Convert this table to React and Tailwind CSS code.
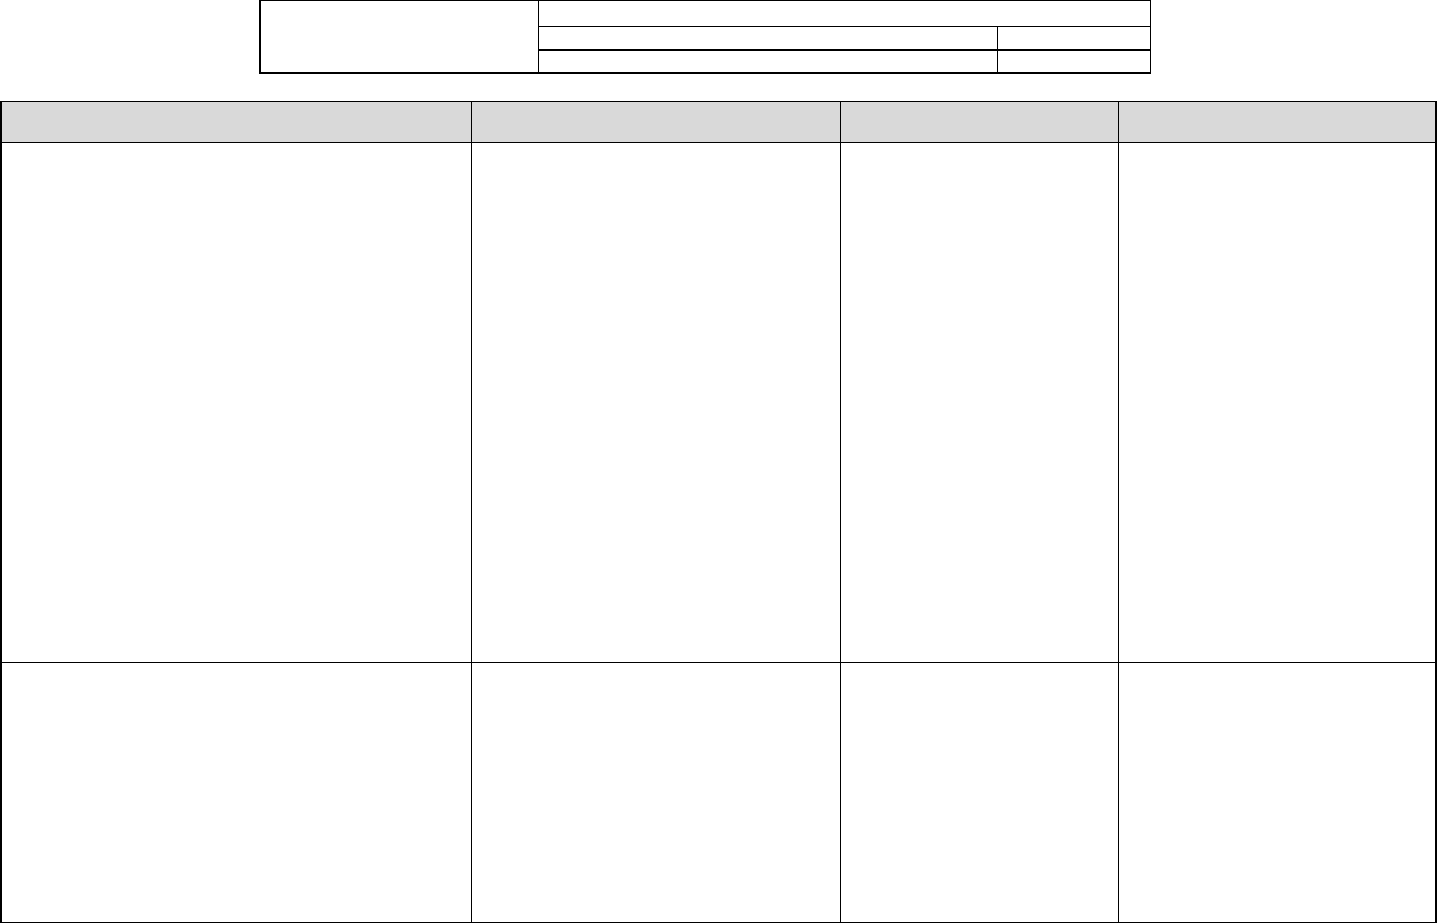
export default function App() {
  const cols = ["w-[470px]", "w-[369px]", "w-[278px]", "w-[318px]"];

  return (
    <div className="w-[1437px] h-[924px] bg-white overflow-hidden font-['Liberation_Sans',Arial,sans-serif]">
      {/* Title block */}
      <div className="ml-[259px] w-[892px] h-[74px] flex border-t border-r border-l-2 border-b-2 border-black">
        <div className="w-[278px] border-r border-black" />
        <div className="flex-1 flex flex-col">
          <div className="h-[26px] border-b border-black" />
          <div className="h-[24px] flex border-b-2 border-black">
            <div className="w-[459px] border-r border-black" />
            <div className="flex-1" />
          </div>
          <div className="flex-1 flex">
            <div className="w-[459px] border-r border-black" />
            <div className="flex-1" />
          </div>
        </div>
      </div>

      {/* Main grid */}
      <div className="mt-[27px] w-[1437px] border-t border-l-2 border-black">
        <div className="flex h-[41px] bg-[#d9d9d9] border-b border-black">
          {cols.map((c, i) => (
            <div key={i} className={`${c} border-r border-black last:border-r-2`} />
          ))}
        </div>
        <div className="flex h-[520px] border-b border-black">
          {cols.map((c, i) => (
            <div key={i} className={`${c} border-r border-black last:border-r-2`} />
          ))}
        </div>
        <div className="flex h-[260px] border-b border-black">
          {cols.map((c, i) => (
            <div key={i} className={`${c} border-r border-black last:border-r-2`} />
          ))}
        </div>
      </div>
    </div>
  );
}
